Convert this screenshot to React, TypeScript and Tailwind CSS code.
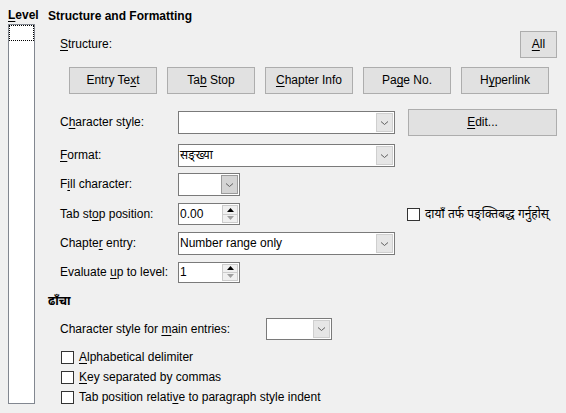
import type { ReactNode } from "react";

const Mn = ({ children }: { children: ReactNode }) => (
  <span className="underline underline-offset-[2px]">{children}</span>
);

function Btn({ children, className = "" }: { children: ReactNode; className?: string }) {
  return (
    <div
      className={`flex h-[27px] items-center justify-center border border-[#adadad] bg-[#e1e1e1] ${className}`}
    >
      {children}
    </div>
  );
}

function Chevron() {
  return (
    <svg width="9" height="6" viewBox="0 0 9 6" className="text-[#606060]">
      <path d="M1 1.5 L4.5 4.5 L8 1.5" fill="none" stroke="currentColor" strokeWidth="1" />
    </svg>
  );
}

function Combo({
  width,
  value,
  hot = false,
  height = "h-[23px]",
}: {
  width: string;
  value?: string;
  hot?: boolean;
  height?: string;
}) {
  return (
    <div className={`flex ${height} ${width} border border-[#7a7a7a] bg-white`}>
      <div className="flex flex-1 items-center overflow-hidden whitespace-nowrap pl-[1px]">{value}</div>
      <div
        className={`m-[1px] flex w-[17px] items-center justify-center border ${
          hot ? "border-[#9a9a9a] bg-[#d4d4d4]" : "border-[#cfcfcf] bg-[#e6e6e6]"
        }`}
      >
        <Chevron />
      </div>
    </div>
  );
}

function Spin({ value, height = "h-[22px]" }: { value: string; height?: string }) {
  return (
    <div className={`flex ${height} w-[62px] border border-[#7a7a7a] bg-white`}>
      <div className="flex flex-1 items-center pl-[1px]">{value}</div>
      <div className="m-[1px] flex w-[16px] flex-col border border-[#cccccc] bg-[#f0f0f0]">
        <div className="flex flex-1 items-center justify-center border-b border-[#cccccc]">
          <svg width="7" height="4" viewBox="0 0 7 4">
            <path d="M0 4 L3.5 0 L7 4 Z" fill="#000" />
          </svg>
        </div>
        <div className="flex flex-1 items-center justify-center">
          <svg width="7" height="4" viewBox="0 0 7 4">
            <path d="M0 0 L3.5 4 L7 0 Z" fill="#a0a0a0" />
          </svg>
        </div>
      </div>
    </div>
  );
}

function Check({ children }: { children: ReactNode }) {
  return (
    <div className="flex items-center gap-[5px] whitespace-nowrap">
      <div className="h-[13px] w-[13px] border border-[#333333] bg-white" />
      <span>{children}</span>
    </div>
  );
}

function Row({ label, children, className = "" }: { label: ReactNode; children: ReactNode; className?: string }) {
  return (
    <div className={`flex items-center pl-3 ${className}`}>
      <div className="w-[118px] whitespace-nowrap">{label}</div>
      {children}
    </div>
  );
}

export default function App() {
  return (
    <div
      className="flex h-[413px] w-[566px] overflow-hidden bg-[#f0f0f0] text-[12px] leading-[15px] text-black"
      style={{ fontFamily: '"Liberation Sans", "Noto Sans", "Noto Sans Devanagari", sans-serif' }}
    >
      {/* Level list */}
      <div className="ml-2 flex w-[27px] flex-col pt-[8px]">
        <div className="h-[16px] whitespace-nowrap font-bold">
          <Mn>L</Mn>evel
        </div>
        <div className="h-[380px] border border-[#828790] bg-white p-0">
          <div className="h-[16px] border border-dotted border-black" />
        </div>
      </div>

      {/* Main */}
      <div className="ml-[13px] flex flex-1 flex-col pr-[9px] pt-[9px]">
        <div className="h-[15px] font-bold">Structure and Formatting</div>

        <div className="mt-[7px] flex h-[27px] items-center justify-between pl-3">
          <span>
            <Mn>S</Mn>tructure:
          </span>
          <Btn className="w-[37px]">
            <span>
              <Mn>A</Mn>ll
            </span>
          </Btn>
        </div>

        <div className="ml-[21px] mt-[9px] flex gap-[10px]">
          <Btn className="w-[88px]">
            <span>
              Entry Te<Mn>x</Mn>t
            </span>
          </Btn>
          <Btn className="w-[88px]">
            <span>
              Ta<Mn>b</Mn> Stop
            </span>
          </Btn>
          <Btn className="w-[88px]">
            <span>
              <Mn>C</Mn>hapter Info
            </span>
          </Btn>
          <Btn className="w-[88px]">
            <span>
              Pa<Mn>g</Mn>e No.
            </span>
          </Btn>
          <Btn className="w-[88px]">
            <span>
              H<Mn>y</Mn>perlink
            </span>
          </Btn>
        </div>

        <Row
          className="mt-[15px] h-[27px]"
          label={
            <>
              C<Mn>h</Mn>aracter style:
            </>
          }
        >
          <Combo width="w-[217px]" />
          <Btn className="ml-[13px] flex-1">
            <span>
              <Mn>E</Mn>dit...
            </span>
          </Btn>
        </Row>

        <Row
          className="mt-[8px] h-[23px]"
          label={
            <>
              <Mn>F</Mn>ormat:
            </>
          }
        >
          <Combo width="w-[217px]" value="सङ्ख्या" />
        </Row>

        <Row
          className="mt-[6px] h-[23px]"
          label={
            <>
              F<Mn>i</Mn>ll character:
            </>
          }
        >
          <Combo width="w-[62px]" hot />
        </Row>

        <Row
          className="mt-[7px] h-[22px]"
          label={
            <>
              Tab st<Mn>o</Mn>p position:
            </>
          }
        >
          <Spin value="0.00" />
          <div className="ml-[167px]">
            <Check>दायाँ तर्फ पङ्क्तिबद्ध गर्नुहोस्</Check>
          </div>
        </Row>

        <Row
          className="mt-[7px] h-[23px]"
          label={
            <>
              Chapte<Mn>r</Mn> entry:
            </>
          }
        >
          <Combo width="w-[217px]" value="Number range only" />
        </Row>

        <Row
          className="mt-[6px] h-[22px]"
          label={
            <>
              Evaluate <Mn>u</Mn>p to level:
            </>
          }
        >
          <Spin value="1" height="h-[21px]" />
        </Row>

        <div className="mt-[11px] h-[16px] font-bold">ढाँचा</div>

        <div className="mt-[8px] flex h-[22px] items-center pl-3">
          <div className="w-[206px] whitespace-nowrap">
            Character style for <Mn>m</Mn>ain entries:
          </div>
          <Combo width="w-[66px]" height="h-[22px]" />
        </div>

        <div className="mt-[7px] flex flex-col pl-[13px]">
          <div className="flex h-[20px] items-center">
            <Check>
              <Mn>A</Mn>lphabetical delimiter
            </Check>
          </div>
          <div className="flex h-[20px] items-center">
            <Check>
              <Mn>K</Mn>ey separated by commas
            </Check>
          </div>
          <div className="flex h-[21px] items-center">
            <Check>
              Tab position relati<Mn>v</Mn>e to paragraph style indent
            </Check>
          </div>
        </div>
      </div>
    </div>
  );
}
